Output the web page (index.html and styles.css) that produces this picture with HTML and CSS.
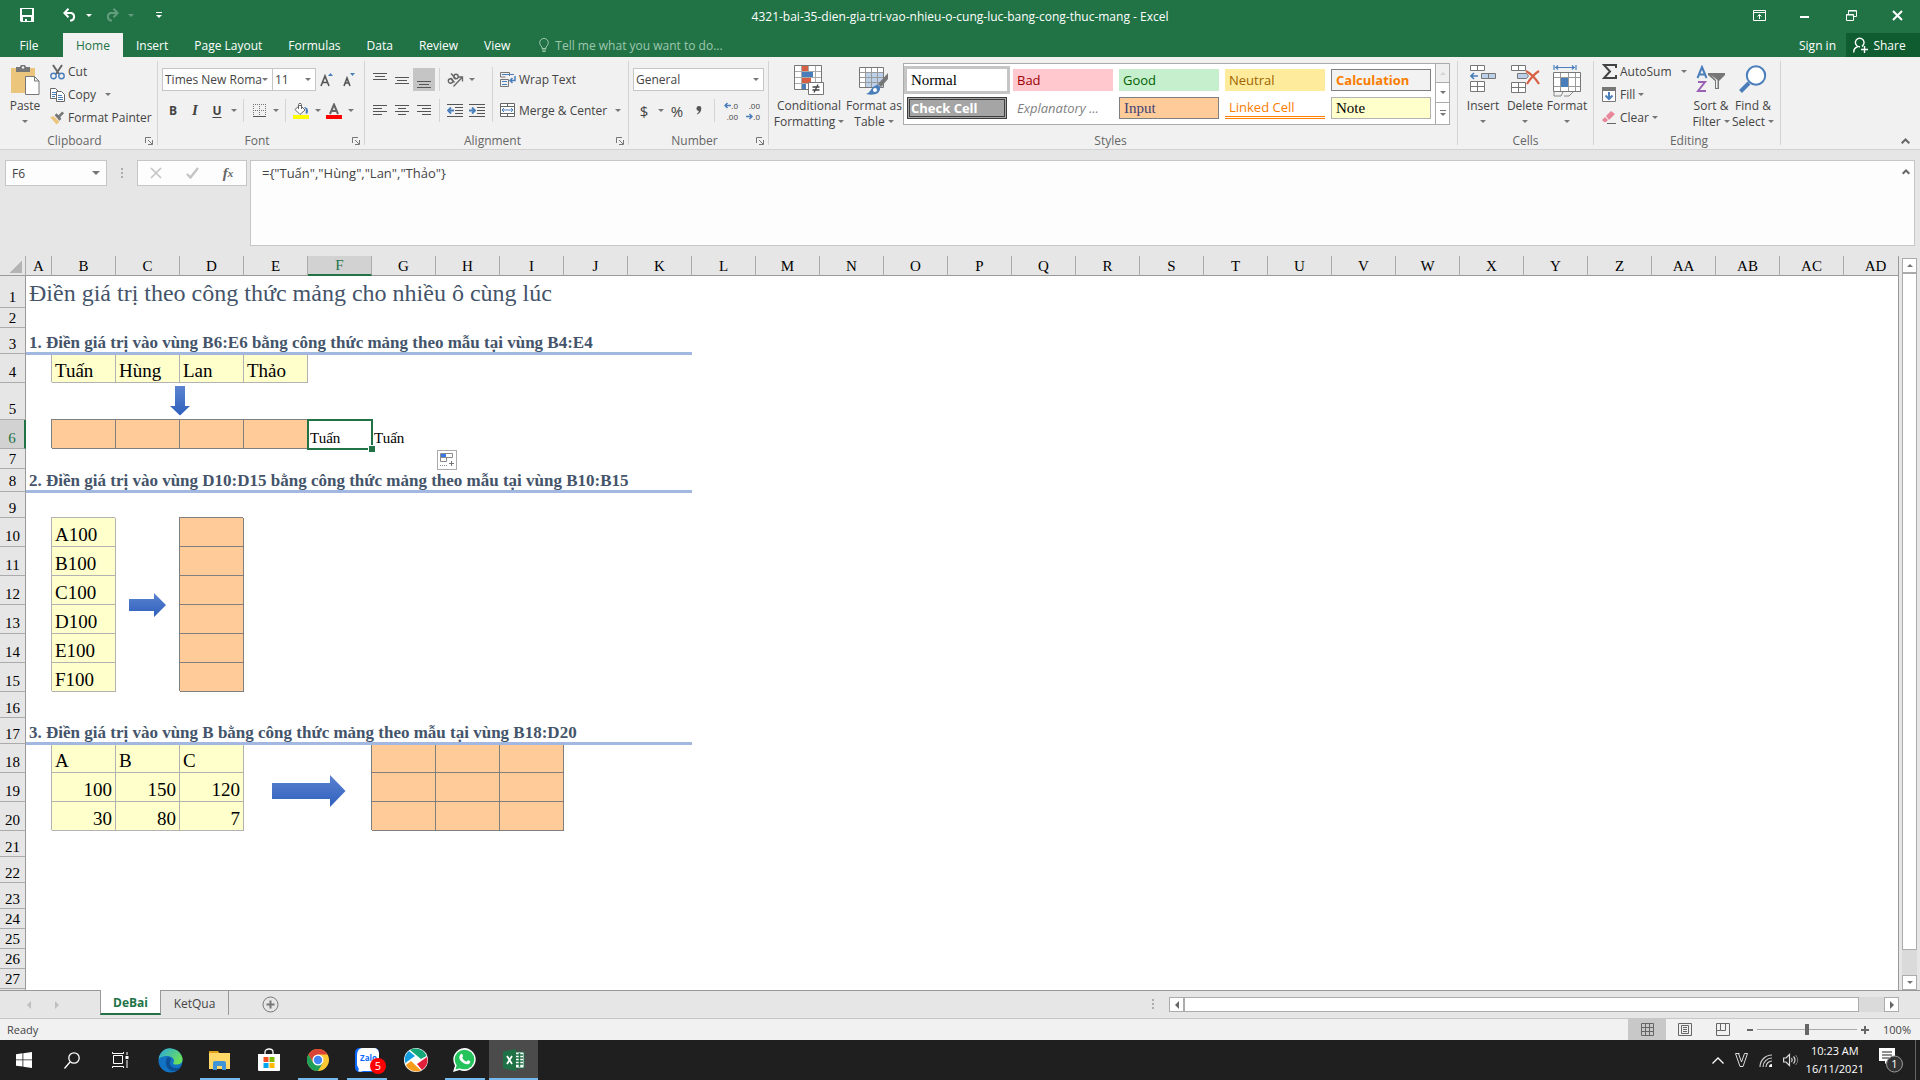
FILE: index.html
```html
<!DOCTYPE html>
<html lang="vi">
<head>
<meta charset="UTF-8">
<meta name="viewport" content="width=device-width, initial-scale=1.0">
<title>4321-bai-35-dien-gia-tri-vao-nhieu-o-cung-luc-bang-cong-thuc-mang - Excel</title>
<link rel="stylesheet" href="styles.css">
</head>
<body>
    <!-- Title bar -->
    <header class="titlebar">
        <div class="quick">
            <button aria-label="Save"><svg width="14" height="14" viewBox="0 0 14 14"><path fill="#fff" fill-rule="evenodd" d="M0 0h14v14H1l-1-1zM2 1v6h10V1zM3 9v4h2v-2h2v2h4V9z"/></svg></button>
            <button aria-label="Undo"><svg width="14" height="14" viewBox="0 0 14 14"><path fill="none" stroke="#fff" stroke-width="2" d="M1 5h7.500a4 4 0 0 1 0 7.500H7M5.500.700L1.300 5l4.200 4.200"/></svg></button>
            <button class="drop light" aria-label="Undo list"><i class="caret"></i></button>
            <button class="off" aria-label="Redo"><svg width="14" height="14" viewBox="0 0 14 14"><path fill="none" stroke="#fff" stroke-width="2" d="M13 5H5.500a4 4 0 0 0 0 7.500H7M8.500.700L12.700 5l-4.200 4.200"/></svg></button>
            <button class="drop light off" aria-label="Redo list"><i class="caret"></i></button>
            <button class="light custom" aria-label="Customize toolbar"><i class="bar"></i><i class="caret"></i></button>
        </div>
        <div class="title">4321-bai-35-dien-gia-tri-vao-nhieu-o-cung-luc-bang-cong-thuc-mang - Excel</div>
        <div class="window">
            <button aria-label="Ribbon options"><svg width="13" height="11" viewBox="0 0 13 11"><path fill="none" stroke="#fff" d="M.5.5h12v10H.5zM.5 2.500h12M6.500 9V4.500M4.500 6.500l2-2 2 2"/></svg></button>
            <button aria-label="Minimize"><svg width="10" height="10" viewBox="0 0 10 10"><path fill="#fff" d="M0 6h9v2H0z"/></svg></button>
            <button aria-label="Restore"><svg width="11" height="11" viewBox="0 0 11 11"><path fill="none" stroke="#fff" d="M.5 4.500h7v6h-7zM.5 5h7M2.500 4V.5h8v6H8M2.500 1h8"/></svg></button>
            <button aria-label="Close"><svg width="11" height="11" viewBox="0 0 11 11"><path stroke="#fff" stroke-width="2" d="M1 1l9 9M10 1l-9 9"/></svg></button>
        </div>
    </header>

    <nav class="tabs">
        <button class="file">File</button>
        <button class="active">Home</button>
        <button>Insert</button>
        <button>Page Layout</button>
        <button>Formulas</button>
        <button>Data</button>
        <button>Review</button>
        <button>View</button>
        <label class="tell">
            <svg width="10" height="14" viewBox="0 0 10 14"><path fill="none" stroke="#9fc7ae" d="M3 10.500V9C1.500 7.500.700 6.500.700 4.700a4.300 4.300 0 0 1 8.600 0C9.300 6.500 8.500 7.500 7 9v1.500zM3 12h4M3.500 13.500h3"/></svg>
            <input type="text" placeholder="Tell me what you want to do...">
        </label>
        <button class="sign">Sign in</button>
        <button class="share"><svg width="15" height="16" viewBox="0 0 15 16"><path fill="none" stroke="#fff" stroke-width="1.400" d="M.7 15.500c0-3 1.500-5 3.800-5.500M7 9.800a4.300 4.300 0 1 1 3-1.500L9 9.500M11.500 9v7M8 12.500h7"/></svg>Share</button>
    </nav>

    <!-- Ribbon -->
    <section class="ribbon">
        <div class="group">
            <div class="body">
                <button class="big paste">
                    <span class="pic"><svg width="29" height="30" viewBox="0 0 29 30"><path fill="#ecc57d" d="M0 3h24v25H0z"/><path fill="#777" d="M5 2h4c0-3 6-3 6 0h4v5H5z"/><circle cx="12" cy="2.500" r="1.200" fill="#f1f1f1"/><path fill="#fff" stroke="#777" d="M14.500 11.500h9l4.500 4.500v13.500H14.500zM23.500 11.500V16H28"/></svg></span>
                    Paste<i class="caret"></i>
                </button>
                <div class="stack">
                    <button><svg width="15" height="16" viewBox="0 0 15 16"><path stroke="#666" stroke-width="2" d="M3 1l6 9M12 1L6 10"/><g fill="none" stroke="#4a7ebb" stroke-width="1.400"><circle cx="3.500" cy="12" r="2.700"/><circle cx="11.500" cy="12" r="2.700"/></g></svg>Cut</button>
                    <button><svg width="15" height="14" viewBox="0 0 15 14"><path fill="#fff" stroke="#666" d="M.5.5h5l3 3v7h-8z"/><path stroke="#4a7ebb" d="M2 4.500h4M2 6.500h4M2 8.500h3"/><path fill="#fff" stroke="#666" d="M6.500 3.500h5l3 3v7h-8z"/><path stroke="#4a7ebb" d="M8 7.500h4M8 9.500h5M8 11.500h5"/></svg>Copy<i class="caret far"></i></button>
                    <button><svg width="15" height="14" viewBox="0 0 16 14"><path fill="#ecc57d" d="M0 6l4-1 6 6-3 3z"/><path fill="#777" d="M5 4l2-2 2 2 4-4 2 2-4 4 1 2-2 2z"/></svg>Format Painter</button>
                </div>
            </div>
            <div class="name"><span>Clipboard</span><svg class="launch" width="8" height="8" viewBox="0 0 8 8"><path fill="none" stroke="#777" d="M.5 6V.5H6M3 3l4 4M7.500 3v4.500H3"/></svg></div>
        </div>

        <div class="group">
            <div class="body rows">
                <div class="line">
                    <select class="font-name" aria-label="Font"><option>Times New Roma</option></select>
                    <select class="font-size" aria-label="Font size"><option>11</option></select>
                    <button class="tool" aria-label="Increase font size"><svg width="14" height="15" viewBox="0 0 14 15"><path fill="none" stroke="#555" stroke-width="1.600" d="M1 14L5 4l4 10M2.500 10.500h5"/><path fill="#4a7ebb" d="M8 4l2.500-3L13 4z"/></svg></button>
                    <button class="tool" aria-label="Decrease font size"><svg width="14" height="15" viewBox="0 0 14 15"><path fill="none" stroke="#555" stroke-width="1.600" d="M2 14l3-8 3 8M3 11h4"/><path fill="#4a7ebb" d="M8 1l2.500 3L13 1z"/></svg></button>
                </div>
                <div class="line">
                    <button class="tool bold">B</button>
                    <button class="tool italic">I</button>
                    <button class="tool under">U</button>
                    <button class="drop" aria-label="Underline style"><i class="caret"></i></button>
                    <i class="sep"></i>
                    <button class="tool" aria-label="Borders"><svg width="13" height="13" viewBox="0 0 13 13"><path stroke="#777" stroke-dasharray="1 1" d="M0 .5h13M0 6.500h13M.5 0v12M6.500 0v12M12.500 0v12"/><path stroke="#555" d="M0 12.500h13"/></svg></button>
                    <button class="drop" aria-label="Border style"><i class="caret"></i></button>
                    <i class="sep"></i>
                    <button class="tool" aria-label="Fill color"><svg width="16" height="16" viewBox="0 0 16 16"><path fill="#ff0" d="M0 12h16v4H0z"/><path fill="#fff" stroke="#666" d="M2 6.500L7 2l5 5-5 4.500zM5.500 6V1.500c0-1.500 3-1.500 3 0V6"/><path fill="#4a7ebb" d="M11 4c4 0 5 4 3 7-1 0-2-1-1-4z"/></svg></button>
                    <button class="drop" aria-label="Fill colors"><i class="caret"></i></button>
                    <button class="tool" aria-label="Font color"><svg width="16" height="16" viewBox="0 0 16 16"><path fill="none" stroke="#666" stroke-width="2" d="M4 11l4-9.500L12 11M5.500 8h5"/><path fill="red" d="M0 12h16v4H0z"/></svg></button>
                    <button class="drop" aria-label="Font colors"><i class="caret"></i></button>
                </div>
            </div>
            <div class="name"><span>Font</span><svg class="launch" width="8" height="8" viewBox="0 0 8 8"><path fill="none" stroke="#777" d="M.5 6V.5H6M3 3l4 4M7.500 3v4.500H3"/></svg></div>
        </div>

        <div class="group">
            <div class="body">
                <div class="rows">
                    <div class="line">
                        <button class="tool" aria-label="Top align"><svg width="14" height="16" viewBox="0 0 14 16"><path stroke="#555" d="M0 1.500h14M2 4.500h10M0 7.500h14"/></svg></button>
                        <button class="tool" aria-label="Middle align"><svg width="14" height="16" viewBox="0 0 14 16"><path stroke="#555" d="M0 5.500h14M2 8.500h10M0 11.500h14"/></svg></button>
                        <button class="tool on" aria-label="Bottom align"><svg width="14" height="16" viewBox="0 0 14 16"><path stroke="#555" d="M0 9.500h14M2 12.500h10M0 15.500h14"/></svg></button>
                        <i class="sep"></i>
                        <button class="tool" aria-label="Orientation"><svg width="17" height="15" viewBox="0 0 17 15"><g fill="none" stroke="#666" stroke-width="1.400"><circle cx="3.500" cy="9" r="2.200"/><path d="M3.500 6l4 4.500"/><circle cx="9" cy="4.500" r="2.200"/><path d="M4 1.500l5 5.500"/></g><path fill="none" stroke="#666" stroke-width="1.300" d="M6.500 14.500l8.500-9M11 5h4.500v4.500"/></svg></button>
                        <button class="drop" aria-label="Orientation list"><i class="caret"></i></button>
                    </div>
                    <div class="line">
                        <button class="tool" aria-label="Align left"><svg width="14" height="11" viewBox="0 0 14 11"><path stroke="#555" d="M0 .5h14M0 3.500h9M0 6.500h14M0 9.500h9"/></svg></button>
                        <button class="tool" aria-label="Center"><svg width="14" height="11" viewBox="0 0 14 11"><path stroke="#555" d="M0 .5h14M3 3.500h8M0 6.500h14M3 9.500h8"/></svg></button>
                        <button class="tool" aria-label="Align right"><svg width="14" height="11" viewBox="0 0 14 11"><path stroke="#555" d="M0 .5h14M5 3.500h9M0 6.500h14M5 9.500h9"/></svg></button>
                        <i class="sep"></i>
                        <button class="tool" aria-label="Decrease indent"><svg width="16" height="13" viewBox="0 0 16 13"><path stroke="#555" d="M0 .5h16M8 3.500h8M8 6.500h8M8 9.500h8M0 12.500h16"/><path fill="none" stroke="#4a7ebb" stroke-width="1.800" d="M1 6.500h6M4 3.500l-3 3 3 3"/></svg></button>
                        <button class="tool" aria-label="Increase indent"><svg width="16" height="13" viewBox="0 0 16 13"><path stroke="#555" d="M0 .5h16M8 3.500h8M8 6.500h8M8 9.500h8M0 12.500h16"/><path fill="none" stroke="#4a7ebb" stroke-width="1.800" d="M0 6.500h6M3 3.500l3 3-3 3"/></svg></button>
                    </div>
                </div>
                <i class="sep tall"></i>
                <div class="rows">
                    <button class="wide"><svg width="16" height="16" viewBox="0 0 16 16"><path fill="none" stroke="#777" d="M.5 4V.5h9V4M.5 4v1h5M.5 7.500h8v7h-8z"/><path stroke="#4a7ebb" d="M2 2.500h12M2 9.500h5M2 12.500h5"/><path fill="none" stroke="#4a7ebb" stroke-width="1.500" d="M15 4v4.500h-5M12.500 6L10 8.500l2.500 2.500"/></svg>Wrap Text</button>
                    <button class="wide"><svg width="16" height="15" viewBox="0 0 16 15"><path fill="#fff" stroke="#666" d="M.5.5h14v13H.5zM.5 3.500h14M.5 10.500h14M7.500.5v3M7.500 10.500v3"/><path fill="none" stroke="#4a7ebb" d="M2 7h11M4 5L2 7l2 2M11 5l2 2-2 2"/></svg>Merge &amp; Center<i class="caret"></i></button>
                </div>
            </div>
            <div class="name"><span>Alignment</span><svg class="launch" width="8" height="8" viewBox="0 0 8 8"><path fill="none" stroke="#777" d="M.5 6V.5H6M3 3l4 4M7.500 3v4.500H3"/></svg></div>
        </div>

        <div class="group">
            <div class="body rows">
                <select class="format" aria-label="Number format"><option>General</option></select>
                <div class="line">
                    <button class="tool sign-char">$</button>
                    <button class="drop" aria-label="Currency list"><i class="caret"></i></button>
                    <button class="tool sign-char">%</button>
                    <button class="tool" aria-label="Comma style"><svg width="6" height="9" viewBox="0 0 6 9"><path fill="#555" d="M3 0a2.300 2.300 0 0 1 2.300 2.500C5.300 5 4 7 1.500 8.500L1 7.700C2.300 6.800 2.800 6 2.800 5A2.300 2.300 0 0 1 3 0z"/></svg></button>
                    <i class="sep"></i>
                    <button class="tool decimals"><span><svg width="7" height="7" viewBox="0 0 7 7"><path fill="none" stroke="#4a7ebb" stroke-width="1.500" d="M1 3.500h6M3.500 1L1 3.500 3.500 6"/></svg>.0</span><span>.00</span></button>
                    <button class="tool decimals"><span>.00</span><span><svg width="7" height="7" viewBox="0 0 7 7"><path fill="none" stroke="#4a7ebb" stroke-width="1.500" d="M0 3.500h6M3.500 1L6 3.500 3.500 6"/></svg>.0</span></button>
                </div>
            </div>
            <div class="name"><span>Number</span><svg class="launch" width="8" height="8" viewBox="0 0 8 8"><path fill="none" stroke="#777" d="M.5 6V.5H6M3 3l4 4M7.500 3v4.500H3"/></svg></div>
        </div>

        <div class="group styles">
            <div class="body">
                <button class="big conditional">
                    <span class="pic"><svg width="30" height="30" viewBox="0 0 30 30"><path fill="#fff" stroke="#777" d="M.5.5h27v24H.5z"/><path stroke="#aaa" d="M7.500 1v23M14.500 1v23M21.500 1v23M1 6.500h26M1 12.500h26M1 18.500h26"/><path fill="#d75f43" d="M8 1h6v5H8zM8 13h9v5H8z"/><path fill="#4a7ebb" d="M8 7h11v5H8zM8 19h4v5H8z"/><path fill="#fff" stroke="#777" d="M14.500 17.500h15v12h-15z"/><path stroke="#444" stroke-width="1.300" d="M18.500 22h7M18.500 25h7M24 19.500l-4 8"/></svg></span>
                    Conditional<span>Formatting<i class="caret"></i></span>
                </button>
                <button class="big">
                    <span class="pic"><svg width="30" height="30" viewBox="0 0 30 30"><path fill="#fff" stroke="#777" d="M.5 2.500h24v20H.5z"/><path fill="#bdd0e9" d="M7 8h17v14H7z"/><path stroke="#999" d="M6.500 3v19M12.500 3v19M18.500 3v19M1 7.500h23M1 12.500h23M1 17.500h23"/><path fill="#777" d="M29 8v6l-7 8-3-3z"/><path fill="#4a7ebb" d="M18 20c4 0 4 5 1 8-3 2-8 2-12 1 5-1 5-8 11-9z"/><circle cx="16" cy="25" r="2" fill="#fff"/></svg></span>
                    Format as<span>Table<i class="caret"></i></span>
                </button>
                <div class="gallery">
                    <div class="swatches">
                        <button class="s-normal">Normal</button>
                        <button class="s-bad">Bad</button>
                        <button class="s-good">Good</button>
                        <button class="s-neutral">Neutral</button>
                        <button class="s-calc">Calculation</button>
                        <button class="s-check">Check Cell</button>
                        <button class="s-expl">Explanatory ...</button>
                        <button class="s-input">Input</button>
                        <button class="s-linked">Linked Cell</button>
                        <button class="s-note">Note</button>
                    </div>
                    <div class="pager">
                        <button class="off" aria-label="Previous styles"><i class="caret up"></i></button>
                        <button aria-label="Next styles"><i class="caret"></i></button>
                        <button class="more" aria-label="More styles"><i class="bar"></i><i class="caret"></i></button>
                    </div>
                </div>
            </div>
            <div class="name"><span>Styles</span></div>
        </div>

        <div class="group cells">
            <div class="body">
                <button class="big">
                    <span class="pic"><svg width="27" height="30" viewBox="0 0 27 30"><path fill="#fff" stroke="#777" d="M.5.5h14v5H.5zM7.500.5v5M.5 16.500h14v10H.5zM7.500 16.500v10M.5 21.500h14"/><path fill="#bdd0e9" stroke="#777" d="M11.500 8.500h14v5h-14zM18.500 8.500v5"/><path fill="none" stroke="#4a7ebb" stroke-width="1.600" d="M1 11h7M4 8l-3 3 3 3"/></svg></span>
                    Insert<i class="caret"></i>
                </button>
                <button class="big">
                    <span class="pic"><svg width="29" height="30" viewBox="0 0 29 30"><path fill="#fff" stroke="#777" d="M.5.5h14v5H.5zM7.500.5v5M.5 17.500h14v10H.5zM7.500 17.500v10M.5 22.500h14"/><path fill="#bdd0e9" stroke="#777" d="M6.500 8.500h9l2 2.500-2 2.500h-9z"/><path fill="none" stroke="#d75f43" stroke-width="2.200" d="M15 6c5 3 10 8 13 13M28 6c-5 3-9 8-12 13"/></svg></span>
                    Delete<i class="caret"></i>
                </button>
                <button class="big">
                    <span class="pic"><svg width="29" height="32" viewBox="0 0 29 32"><path fill="none" stroke="#4a7ebb" stroke-width="1.200" d="M1 0v5M23 0v5M2 2.500h20M5 .5l-2 2 2 2M19 .5l2 2-2 2"/><path fill="#fff" stroke="#777" d="M.5 7.500h27v19H.5z"/><path stroke="#999" d="M7.500 8v18M15.500 8v18M22.500 8v18M1 12.500h26M1 21.500h26"/><path fill="#4a7ebb" d="M8 13h7v9H8z"/><path fill="none" stroke="#888" d="M1 27v4h7l2-4M11 31h5l4-4"/></svg></span>
                    Format<i class="caret"></i>
                </button>
            </div>
            <div class="name"><span>Cells</span></div>
        </div>

        <div class="group editing">
            <div class="body">
                <div class="stack">
                    <button><svg width="15" height="15" viewBox="0 0 15 15"><path fill="none" stroke="#444" stroke-width="2" d="M14 4V1H2l6 6.500L2 14h12v-3"/></svg>AutoSum<i class="caret far"></i></button>
                    <button><svg width="15" height="16" viewBox="0 0 15 16"><path fill="#fff" stroke="#777" d="M.5.5h13v14H.5z"/><path fill="#777" d="M0 0h14v4H0z"/><path fill="none" stroke="#4a7ebb" stroke-width="2" d="M7 5v7M3.500 8.500L7 12l3.500-3.500"/></svg>Fill<i class="caret"></i></button>
                    <button><svg width="15" height="14" viewBox="0 0 15 14"><path fill="#e8879a" d="M4 5l5-5 4 3-6 6z"/><path fill="#e8879a" d="M3 6l3 3-2 2H2l-2-2z"/><path stroke="#666" d="M5 12.500h9"/></svg>Clear<i class="caret"></i></button>
                </div>
                <button class="big">
                    <span class="pic"><svg width="30" height="30" viewBox="0 0 30 30"><path fill="none" stroke="#4a7ebb" stroke-width="2" d="M1.500 13L6 2l4.500 11M3 9.500h6"/><path fill="none" stroke="#9a62b5" stroke-width="2" d="M2 17h7L2 26h8"/><path fill="#777" d="M12 8h17v2l-6 6v8h-4v-8l-7-6z"/><path fill="#f1f1f1" d="M15 10l5 5v8h1.500v-8z"/></svg></span>
                    Sort &amp;<span>Filter<i class="caret"></i></span>
                </button>
                <button class="big">
                    <span class="pic"><svg width="28" height="28" viewBox="0 0 28 28"><path stroke="#4a7ebb" stroke-width="4" d="M1.500 26.500L10 18"/><circle cx="17" cy="10.500" r="9.200" fill="#fff" stroke="#4a7ebb" stroke-width="2"/></svg></span>
                    Find &amp;<span>Select<i class="caret"></i></span>
                </button>
            </div>
            <div class="name"><span>Editing</span></div>
        </div>
        <button class="collapse" aria-label="Collapse ribbon"><svg width="9" height="6" viewBox="0 0 9 6"><path fill="none" stroke="#666" stroke-width="2" d="M.7 5.300l3.800-3.800 3.800 3.800"/></svg></button>
    </section>

    <!-- Formula bar -->
    <section class="formula">
        <div class="namebox"><input type="text" value="F6" aria-label="Name box"><button aria-label="Names"><i class="caret large"></i></button></div>
        <i class="dots"></i>
        <div class="fx">
            <button aria-label="Cancel"><svg width="12" height="12" viewBox="0 0 12 12"><path stroke="#c4c4c4" stroke-width="1.600" d="M1 1l10 10M11 1L1 11"/></svg></button>
            <button aria-label="Enter"><svg width="13" height="12" viewBox="0 0 13 12"><path fill="none" stroke="#c4c4c4" stroke-width="2.400" d="M1 7l3.500 3.500L12 1"/></svg></button>
            <button class="fn"><em>f</em>x</button>
        </div>
        <div class="entry">
            <textarea aria-label="Formula">={"Tuấn","Hùng","Lan","Thảo"}</textarea>
            <button aria-label="Collapse formula bar"><svg width="8" height="6" viewBox="0 0 8 6"><path fill="none" stroke="#666" stroke-width="2" d="M.7 4.800L4 1.500l3.300 3.300"/></svg></button>
        </div>
    </section>

    <!-- Sheet -->
    <main class="sheet">
        <div class="grid">
            <table>
                <colgroup><col class="c-num"><col class="c-a"><col span="29"></colgroup>
                <thead>
                    <tr><th class="corner"></th><th>A</th><th>B</th><th>C</th><th>D</th><th>E</th><th class="sel">F</th><th>G</th><th>H</th><th>I</th><th>J</th><th>K</th><th>L</th><th>M</th><th>N</th><th>O</th><th>P</th><th>Q</th><th>R</th><th>S</th><th>T</th><th>U</th><th>V</th><th>W</th><th>X</th><th>Y</th><th>Z</th><th>AA</th><th>AB</th><th>AC</th><th>AD</th></tr>
                </thead>
                <tbody>
                    <tr class="h32"><th>1</th><td class="h1" colspan="11">Điền giá trị theo công thức mảng cho nhiều ô cùng lúc</td></tr>
                    <tr class="h20"><th>2</th></tr>
                    <tr class="h26"><th>3</th><td class="h2" colspan="11">1. Điền giá trị vào vùng B6:E6 bằng công thức mảng theo mẫu tại vùng B4:E4</td></tr>
                    <tr class="h29"><th>4</th><td></td><td class="note">Tuấn</td><td class="note">Hùng</td><td class="note">Lan</td><td class="note">Thảo</td></tr>
                    <tr class="h37"><th>5</th></tr>
                    <tr class="h29"><th class="sel">6</th><td></td><td class="in"></td><td class="in"></td><td class="in"></td><td class="in"></td><td class="current">Tuấn</td><td>Tuấn</td></tr>
                    <tr class="h20"><th>7</th></tr>
                    <tr class="h23"><th>8</th><td class="h2" colspan="11">2. Điền giá trị vào vùng D10:D15 bằng công thức mảng theo mẫu tại vùng B10:B15</td></tr>
                    <tr class="h26"><th>9</th></tr>
                    <tr class="h29"><th>10</th><td></td><td class="note">A100</td><td></td><td class="in"></td></tr>
                    <tr class="h29"><th>11</th><td></td><td class="note">B100</td><td></td><td class="in"></td></tr>
                    <tr class="h29"><th>12</th><td></td><td class="note">C100</td><td></td><td class="in"></td></tr>
                    <tr class="h29"><th>13</th><td></td><td class="note">D100</td><td></td><td class="in"></td></tr>
                    <tr class="h29"><th>14</th><td></td><td class="note">E100</td><td></td><td class="in"></td></tr>
                    <tr class="h29"><th>15</th><td></td><td class="note">F100</td><td></td><td class="in"></td></tr>
                    <tr class="h26"><th>16</th></tr>
                    <tr class="h26"><th>17</th><td class="h2" colspan="11">3. Điền giá trị vào vùng B bằng công thức mảng theo mẫu tại vùng B18:D20</td></tr>
                    <tr class="h29"><th>18</th><td></td><td class="note">A</td><td class="note">B</td><td class="note">C</td><td colspan="2"></td><td class="in"></td><td class="in"></td><td class="in"></td></tr>
                    <tr class="h29"><th>19</th><td></td><td class="note num">100</td><td class="note num">150</td><td class="note num">120</td><td colspan="2"></td><td class="in"></td><td class="in"></td><td class="in"></td></tr>
                    <tr class="h29"><th>20</th><td></td><td class="note num">30</td><td class="note num">80</td><td class="note num">7</td><td colspan="2"></td><td class="in"></td><td class="in"></td><td class="in"></td></tr>
                    <tr class="h26"><th>21</th></tr>
                    <tr class="h26"><th>22</th></tr>
                    <tr class="h26"><th>23</th></tr>
                    <tr class="h20"><th>24</th></tr>
                    <tr class="h20"><th>25</th></tr>
                    <tr class="h20"><th>26</th></tr>
                    <tr class="h20"><th>27</th></tr>
                    <tr class="h20"><th></th></tr>
                </tbody>
            </table>
            <!-- shapes floating over the cells -->
            <svg class="shape down" width="20" height="30" viewBox="0 0 20 30"><defs><linearGradient id="blue" x2="0" y2="1"><stop offset="0" stop-color="#5b83d0"/><stop offset="1" stop-color="#2f60bd"/></linearGradient></defs><path fill="url(#blue)" d="M5 0h10v20h5L10 29.500 0 20h5z"/></svg>
            <svg class="shape across" width="38" height="24" viewBox="0 0 38 24"><path fill="url(#blue)" d="M0 6h25V0l12 12-12 12v-6H0z"/></svg>
            <svg class="shape long" width="74" height="32" viewBox="0 0 74 32"><path fill="url(#blue)" d="M0 8h58V0l15.500 16L58 32v-8H0z"/></svg>
            <button class="autofill" aria-label="Auto fill options"><svg width="15" height="15" viewBox="0 0 15 15"><path fill="#fff" stroke="#888" d="M.5.5h12v4H.5zM.5 4.500h6v4h-6z"/><path fill="#3b78e7" d="M1 1h5v3H1z"/><path stroke="#888" stroke-dasharray="1 1" d="M0 12.500h8"/><path stroke="#777" d="M11.500 8v5M9 10.500h5"/></svg></button>
        </div>
        <div class="vscroll">
            <button aria-label="Scroll up"><i class="caret up"></i></button>
            <i class="thumb"></i>
            <i class="track"></i>
            <button aria-label="Scroll down"><i class="caret"></i></button>
        </div>
    </main>

    <div class="sheetbar">
        <button class="nav" aria-label="Previous sheet"><i class="caret left"></i></button>
        <button class="nav" aria-label="Next sheet"><i class="caret right"></i></button>
        <button class="tab active">DeBai</button>
        <button class="tab">KetQua</button>
        <button class="add" aria-label="New sheet"><svg width="17" height="17" viewBox="0 0 17 17"><circle cx="8.500" cy="8.500" r="7.500" fill="none" stroke="#777"/><path stroke="#777" stroke-width="2" d="M8.500 4.500v8M4.500 8.500h8"/></svg></button>
        <i class="dots"></i>
        <div class="hscroll">
            <button aria-label="Scroll left"><i class="caret left"></i></button>
            <i class="thumb"></i>
            <i class="track"></i>
            <button aria-label="Scroll right"><i class="caret right"></i></button>
        </div>
    </div>

    <footer class="status">
        <span class="ready">Ready</span>
        <button class="on" aria-label="Normal view"><svg width="13" height="13" viewBox="0 0 13 13"><path fill="none" stroke="#666" d="M.5.5h12v12H.5zM4.500 0v13M8.500 0v13M0 4.500h13M0 8.500h13"/></svg></button>
        <button aria-label="Page layout view"><svg width="14" height="13" viewBox="0 0 14 13"><path fill="none" stroke="#666" d="M.5.5h13v12H.5zM3.500 2.500h7v8h-7zM5 4.500h4M5 6.500h4M5 8.500h4"/></svg></button>
        <button aria-label="Page break view"><svg width="14" height="13" viewBox="0 0 14 13"><path fill="none" stroke="#666" d="M.5.5h13v12H.5zM4.500 0v7.500H0M9.500 0v7.500H4.500"/></svg></button>
        <button class="zoom" aria-label="Zoom out"><svg width="8" height="8" viewBox="0 0 8 8"><path fill="#666" d="M1 3h6v2H1z"/></svg></button>
        <input type="range" min="0" max="200" value="100" aria-label="Zoom">
        <button class="zoom" aria-label="Zoom in"><svg width="8" height="8" viewBox="0 0 8 8"><path fill="#666" d="M0 3h8v2H0zM3 0h2v8H3z"/></svg></button>
        <span class="percent">100%</span>
    </footer>

    <!-- Windows taskbar -->
    <div class="taskbar">
        <button aria-label="Start"><svg width="16" height="16" viewBox="0 0 16 16"><path fill="#fff" d="M0 2.200L6.500 1.300v6.200H0zM7.300 1.200L16 0v7.500H7.300zM0 8.300h6.500v6.300L0 13.700zM7.300 8.300H16V16l-8.700-1.200z"/></svg></button>
        <button aria-label="Search"><svg width="16" height="17" viewBox="0 0 16 17"><path fill="none" stroke="#fff" stroke-width="1.300" d="M.5 16.500L6 10"/><circle cx="10" cy="6" r="5.200" fill="none" stroke="#fff" stroke-width="1.300"/></svg></button>
        <button aria-label="Task view"><svg width="17" height="16" viewBox="0 0 17 16"><path fill="none" stroke="#fff" d="M1.500 3.500h9v8h-9zM.5 0v1.500h11V0M.5 16v-1.500h11V16M15 0v3M15 8v8"/><path fill="#fff" d="M13.500 4h3v3h-3z"/></svg></button>
        <button class="app first" aria-label="Edge"><svg width="25" height="25" viewBox="0 0 25 25"><defs><linearGradient id="edge" y2=".6"><stop offset="0" stop-color="#2aa6e0"/><stop offset="1" stop-color="#6be05a"/></linearGradient></defs><circle cx="12.500" cy="12.500" r="12" fill="#1273c4"/><path fill="url(#edge)" d="M.6 11C2 4 7-.5 13 .5 20 1 25 7 24.500 12c-.5 4-4 5-8 4.500-2-.5-1-2-.5-3.500C16 8 6 6 .6 11z"/><path fill="#0c4f94" d="M9 10c-3 6 0 12 6 13 3 .5 6-1 8-4-4 2.500-12 1-11-5 0-2 1-3 1-3s-2-3-4-1z"/></svg></button>
        <button class="app open" aria-label="Explorer"><svg width="22" height="19" viewBox="0 0 22 19"><path fill="#e0a21a" d="M0 0h9l2 3H0z"/><path fill="#ffd868" d="M0 2h21v16H0z"/><path fill="#3f94d8" d="M4 19v-7q0-2 2-2h9q2 0 2 2v7h-4v-4H8v4z"/></svg></button>
        <button class="app" aria-label="Store"><svg width="22" height="24" viewBox="0 0 22 24"><path fill="none" stroke="#fff" stroke-width="1.300" d="M7 7V4c0-4 8-4 8 0v3"/><path fill="#fff" d="M0 6h22v16q0 1-1 1H1q-1 0-1-1z"/><path fill="#f25022" d="M5.500 9h5v5h-5z"/><path fill="#7fba00" d="M11.500 9h5v5h-5z"/><path fill="#00a4ef" d="M5.500 15h5v5h-5z"/><path fill="#ffb900" d="M11.500 15h5v5h-5z"/></svg></button>
        <button class="app open" aria-label="Chrome"><svg width="22" height="24" viewBox="0 0 24 24"><circle cx="12" cy="12" r="12" fill="#fcc934"/><path fill="#da4437" d="M1.600 6A12 12 0 0 1 22.400 6H12l-5.200 9z"/><path fill="#1e9e58" d="M1.600 6A12 12 0 0 0 12 24l5.200-9H6.800z"/><circle cx="12" cy="12" r="6" fill="#fff"/><circle cx="12" cy="12" r="4.600" fill="#4285f4"/></svg></button>
        <button class="app open zalo" aria-label="Zalo"><svg width="24" height="24" viewBox="0 0 24 24"><path fill="#0a68ff" d="M5 0h14q5 0 5 5v14q0 5-5 5H5q-5 0-5-5V5q0-5 5-5z"/><path fill="#fff" d="M7 0h12q4 0 5 5v14q0 4-4 4H8c-2 1-4 1-5 0 2-2 0-3-1-6V7q0-6 5-7z"/><text x="5" y="13" font-size="8" font-weight="bold" fill="#0a68ff">Zalo</text></svg><span class="badge">5</span></button>
        <button class="app" aria-label="Photos"><svg width="24" height="24" viewBox="0 0 24 24"><circle cx="12" cy="12" r="12" fill="#fff"/><path fill="#12a878" d="M6 2a11.500 11.500 0 0 1 16.500 6L17 11z"/><path fill="#e0203a" d="M23 9a11.500 11.500 0 0 1-5 13l-5-6z"/><path fill="#f59c1a" d="M17 22.500A11.500 11.500 0 0 1 2 17l5-4z"/><path fill="#149ee0" d="M1.300 15A11.500 11.500 0 0 1 5 3l6 5z"/></svg></button>
        <button class="app open" aria-label="WhatsApp"><svg width="23" height="24" viewBox="0 0 23 24"><path fill="#fff" d="M11.500 0a11.500 11.500 0 1 1-5 22L0 24l2-6.500A11.500 11.500 0 0 1 11.500 0z"/><circle cx="11.500" cy="11.500" r="9.800" fill="#25c35b"/><path fill="#25c35b" d="M2.500 21.500L4 16l4 4z"/><path fill="#fff" d="M8 6c1-.5 1.500 0 2 2 .3 1-1 1.300-.6 2 1 2 2 2.800 4 3.600.8 0 1-1.600 1.800-1.300 2 .8 2.300 1.200 2 2-1 2.500-3.500 2.500-6.500 1C7 13 4.500 9 8 6z"/></svg></button>
        <button class="app open active" aria-label="Excel"><svg width="22" height="22" viewBox="0 0 22 22"><path fill="#fff" stroke="#1f7246" d="M11 3h10v16H11z"/><path stroke="#1f7246" stroke-width="1.500" d="M13 6h7M13 9h7M13 12h7M13 15h7M16.500 4v14"/><path fill="#1f7246" d="M0 2.500L13 0v22L0 19.500z"/><path stroke="#fff" stroke-width="1.800" d="M4 7l5 8M9 7l-5 8"/></svg></button>
        <div class="tray">
            <div class="tray-icons">
                <svg width="12" height="7" viewBox="0 0 12 7"><path fill="none" stroke="#fff" stroke-width="1.300" d="M.5 6.500L6 1l5.500 5.500"/></svg>
                <svg width="13" height="14" viewBox="0 0 13 14"><path fill="none" stroke="#ddd" d="M.5.5h3L6.500 9l3-8.500h3L8 13.500H5zM3 .5h1.500"/></svg>
                <svg width="13" height="13" viewBox="0 0 13 13"><g fill="none" stroke="#ccc" stroke-width="1.200"><path d="M1 13A12 12 0 0 1 13 1"/><path d="M4 13a9 9 0 0 1 9-9"/><path d="M7 13a6 6 0 0 1 6-6"/></g><path fill="#fff" d="M10 13a3 3 0 0 1 3-3v3z"/></svg>
                <svg width="16" height="14" viewBox="0 0 16 14"><path fill="none" stroke="#ddd" stroke-width="1.200" d="M.6 5v4H3l3.500 3.500v-11L3 5zM8.500 5q1.500 2 0 4M10.500 3.500q3 3.500 0 7"/><path fill="none" stroke="#777" d="M12.500 2q4.500 5 0 10"/></svg>
            </div>
            <div class="clock"><span>10:23 AM</span><span>16/11/2021</span></div>
            <svg class="notice" width="24" height="25" viewBox="0 0 24 25"><path fill="#fff" d="M0 0h16v13H9l-3 3v-3H0z"/><path stroke="#222" stroke-width="1.200" d="M3 4h10M3 7h10M3 10h7"/><circle cx="15.500" cy="16" r="8" fill="#333" stroke="#999"/><text x="15.500" y="20" font-size="11" text-anchor="middle" fill="#fff">1</text></svg>
        </div>
    </div>
</body>
</html>
```
FILE: styles.css
```css
* {
    box-sizing: border-box;
}
body {
    margin: 0;
    height: 100vh;
    display: flex;
    flex-direction: column;
    overflow: hidden;
    background-color: #e6e6e6;
    color: #444;
    font-family: "Open Sans", "Noto Sans", sans-serif;
    font-size: 12px;
}
button, input, select, textarea {
    margin: 0;
    padding: 0;
    border: none;
    border-radius: 0;
    background: none;
    color: inherit;
    font: inherit;
    outline: none;
}
button {
    display: flex;
    align-items: center;
    justify-content: center;
    white-space: nowrap;
}
svg {
    display: block;
    flex: none;
}
.off {
    opacity: 0.3;
}

/* small triangles */
.caret {
    display: inline-block;
    flex: none;
    width: 0;
    border: 3px solid transparent;
    border-top-color: #777;
    border-bottom-width: 0;
}
.caret.large {
    border-width: 4px 4px 0;
}
.caret.up {
    border-width: 0 3px 3px;
    border-bottom-color: #777;
}
.caret.left {
    border-width: 4px 4px 4px 0;
    border-color: transparent #666;
}
.caret.right {
    border-width: 4px 0 4px 4px;
    border-color: transparent #666;
}
.bar {
    width: 6px;
    height: 1px;
    background-color: #777;
}
.light .caret {
    border-top-color: #fff;
}
.light .bar {
    background-color: #fff;
}
.custom, .more {
    flex-direction: column;
    gap: 2px;
}

/* title bar */
.titlebar {
    display: grid;
    grid-template-columns: 1fr auto 1fr;
    height: 33px;
    background-color: #217346;
    color: #fff;
}
.quick {
    display: flex;
    align-items: center;
    padding: 0 0 3px 16px;
}
.quick button {
    width: 22px;
    height: 22px;
}
.quick button:nth-child(2) {
    margin-left: 21px;
}
.quick .drop {
    width: 14px;
    margin: 0 5px 0 1px;
}
.quick .custom {
    margin-left: 5px;
}
.title {
    align-self: center;
}
.window {
    display: flex;
    justify-content: flex-end;
    padding-bottom: 3px;
}
.window button {
    width: 46px;
}

/* ribbon tabs */
.tabs {
    display: flex;
    height: 24px;
    background-color: #217346;
    color: #fff;
}
.tabs button {
    padding: 0 13px;
}
.tabs .file {
    width: 63px;
    padding-right: 18px;
}
.tabs .active {
    background-color: #f1f1f1;
    color: #217346;
}
.tell {
    display: flex;
    flex: 1;
    align-items: center;
    gap: 6px;
    padding-left: 16px;
}
.tell input {
    flex: 1;
}
.tell input::placeholder {
    color: #9fc7ae;
}
.tabs .sign {
    padding: 0 10px;
}
.tabs .share {
    gap: 5px;
    width: 74px;
    padding: 0 14px 0 7px;
    background-color: #0e5c2f;
}

/* ribbon */
.ribbon {
    display: flex;
    height: 93px;
    padding-top: 4px;
    background-color: #f1f1f1;
    border-bottom: 1px solid #d2d2d2;
}
.group {
    display: flex;
    flex-direction: column;
    padding: 0 5px 0 4px;
    background: linear-gradient(#d4d4d4, #d4d4d4) right top / 1px 84px no-repeat;
}
.body {
    display: flex;
    height: 72px;
}
.name {
    display: flex;
    align-items: center;
    height: 15px;
    color: #666;
}
.name span {
    flex: 1;
    text-align: center;
}
.stack {
    display: grid;
    grid-auto-rows: 23px;
    margin-top: -1px;
}
.stack button {
    justify-content: flex-start;
    gap: 3px;
}
.stack .far {
    margin-left: 6px;
}
.rows {
    display: flex;
    flex-direction: column;
    gap: 8px;
    padding-top: 7px;
}
.line {
    display: flex;
    height: 23px;
}
.tool {
    width: 22px;
    height: 23px;
}
.tool.on {
    background-color: #c5c5c5;
}
.drop {
    width: 11px;
}
.sep {
    width: 1px;
    margin: 0 4px;
    background-color: #d4d4d4;
}
.sep.tall {
    height: 55px;
    margin: 6px 7px 0 4px;
}
.big {
    flex-direction: column;
    justify-content: flex-start;
    width: 42px;
    padding-top: 4px;
    line-height: 16px;
}
.big .pic {
    height: 33px;
}
.big > .caret {
    margin-top: 6px;
}
.big span .caret {
    margin: 0 0 3px 3px;
}
.group:first-child {
    width: 158px;
}
.paste {
    width: 42px;
    margin-right: 4px;
}
.group:nth-child(2) {
    width: 207px;
}
.group:nth-child(3) {
    width: 264px;
}
.group:nth-child(4) {
    width: 140px;
}
select {
    height: 23px;
    padding-left: 2px;
    border: 1px solid #c6c6c6;
    appearance: none;
    background: #fff url("data:image/svg+xml,%3Csvg xmlns='http://www.w3.org/2000/svg' width='12' height='3'%3E%3Cpath fill='%23777' d='M3 0h6L6 3z'/%3E%3C/svg%3E") right 1px center no-repeat;
}
.font-name {
    width: 112px;
    padding-right: 10px;
}
.font-size {
    width: 44px;
    margin: 0 1px 0 -1px;
}
.format {
    width: 131px;
}
.bold {
    font-weight: bold;
}
.italic {
    font-family: "Liberation Serif", serif;
    font-size: 15px;
    font-style: italic;
    font-weight: bold;
}
.under {
    font-weight: bold;
    text-decoration: underline;
    text-underline-offset: 2px;
}
.wide {
    justify-content: flex-start;
    gap: 3px;
    height: 23px;
}
.wide .caret {
    margin-left: 5px;
}
.sign-char {
    font-size: 15px;
}
.decimals {
    flex-direction: column;
    align-items: flex-end;
    padding-right: 3px;
    font-size: 8px;
    line-height: 11px;
}
.decimals span {
    display: flex;
    align-items: center;
}

/* cell styles gallery */
.styles {
    flex: 1;
    padding: 0 8px 0 2px;
}
.conditional {
    width: 76px;
}
.styles .big:nth-child(2) {
    width: 54px;
}
.gallery {
    display: flex;
    flex: 1;
    height: 62px;
    margin: 2px 0 0 2px;
    border: 1px solid #ababab;
    background-color: #fff;
}
.swatches {
    display: grid;
    flex: 1;
    grid-template-columns: repeat(5, 1fr);
    grid-auto-rows: 22px;
    gap: 6px;
    padding: 5px 4px 0 3px;
}
.swatches button {
    justify-content: flex-start;
    padding-left: 4px;
    font-size: 13px;
}
.swatches .s-normal, .swatches .s-input, .swatches .s-note {
    font-family: "Liberation Serif", serif;
    font-size: 15px;
}
.s-normal {
    color: #000;
    box-shadow: 0 0 0 3px #c5c5c5;
}
.s-bad {
    background-color: #ffc7ce;
    color: #9c0006;
}
.s-good {
    background-color: #c6efce;
    color: #006100;
}
.s-neutral {
    background-color: #ffeb9c;
    color: #9c6500;
}
.s-calc {
    border: 1px solid #7f7f7f;
    background-color: #f2f2f2;
    color: #fa7d00;
    font-weight: bold;
}
.s-check {
    border: 3px double #3f3f3f;
    background-color: #a5a5a5;
    color: #fff;
    font-weight: bold;
}
.swatches .s-check {
    padding-left: 1px;
}
.s-expl {
    color: #7f7f7f;
    font-style: italic;
}
.s-input {
    border: 1px solid #7f7f7f;
    background-color: #ffcc99;
    color: #3f3f76;
}
.s-linked {
    border-bottom: 3px double #ff8001;
    color: #fa7d00;
}
.s-note {
    border: 1px solid #b2b2b2;
    background-color: #ffffcc;
    color: #000;
}
.pager {
    display: grid;
    width: 14px;
    border-left: 1px solid #ababab;
}
.pager button + button {
    border-top: 1px solid #ababab;
}
.pager .off {
    background-color: #ccc;
}
.cells {
    width: 136px;
}
.editing {
    width: 187px;
    padding-left: 8px;
}
.editing .stack {
    width: 88px;
}
.collapse {
    align-self: flex-end;
    width: 139px;
    height: 16px;
    padding: 0 10px 0 0;
    justify-content: flex-end;
}

/* formula bar */
.formula {
    display: flex;
    align-items: flex-start;
    height: 106px;
    padding: 10px 5px 0;
}
.namebox, .fx, .entry {
    display: flex;
    border: 1px solid #c6c6c6;
    background-color: #fdfdfd;
}
.namebox {
    width: 102px;
    height: 26px;
}
.namebox input {
    flex: 1;
    min-width: 0;
    padding-left: 6px;
}
.namebox button {
    width: 20px;
}
.dots {
    width: 2px;
    height: 11px;
    margin: 8px 14px 0;
    background: repeating-linear-gradient(#ababab 0 2px, transparent 2px 4px);
}
.fx {
    width: 110px;
    height: 26px;
    margin-right: 3px;
}
.fx button {
    flex: 1;
}
.fx .fn {
    color: #666;
    font-family: "Liberation Serif", serif;
    font-size: 11px;
    font-weight: bold;
    font-style: italic;
}
.fn em {
    font-size: 15px;
}
.entry {
    flex: 1;
    height: 86px;
}
.entry textarea {
    flex: 1;
    padding: 3px 11px;
    resize: none;
    font-size: 13px;
    line-height: 18px;
}
.entry button {
    width: 16px;
    height: 22px;
}

/* sheet */
.sheet {
    display: flex;
    flex: 1;
    min-height: 0;
}
.grid {
    position: relative;
    flex: 1;
    overflow: hidden;
    background-color: #fff;
    border-right: 1px solid #999;
}
table {
    width: 1908px;
    table-layout: fixed;
    border-spacing: 0;
    color: #000;
    font-family: "Liberation Serif", serif;
    font-size: 15px;
    line-height: 17px;
}
col {
    width: 64px;
}
.c-num, .c-a {
    width: 26px;
}
th {
    padding: 0;
    background-color: #e6e6e6;
    font-weight: normal;
    vertical-align: bottom;
}
thead th {
    height: 20px;
    border-right: 1px solid #ababab;
    border-bottom: 1px solid #999;
}
tbody th {
    padding-bottom: 1px;
    border-right: 1px solid #999;
    border-bottom: 1px solid #ababab;
}
.h20 th, .h26 th {
    padding-bottom: 0;
}
thead .sel {
    border-bottom: 2px solid #217346;
    background-color: #d2d2d2;
    color: #217346;
}
tbody .sel {
    border-right: 2px solid #217346;
    background-color: #d2d2d2;
    color: #217346;
}
.corner {
    background: linear-gradient(135deg, transparent 50%, #b4b4b4 50%) 10px 5px / 12px 12px no-repeat #e6e6e6;
}
td {
    padding: 0 3px 2px 2px;
    vertical-align: bottom;
    white-space: nowrap;
}
.h20 { height: 20px; }
.h23 { height: 23px; }
.h26 { height: 26px; }
.h29 { height: 29px; }
.h32 { height: 32px; }
.h37 { height: 37px; }
.h1 {
    padding-left: 3px;
    color: #44546a;
    font-size: 24px;
    line-height: 26px;
}
.h2 {
    position: relative;
    padding: 0 0 0 3px;
    border-bottom: 2px solid #a2b8e1;
    box-shadow: 0 1px 0 #a2b8e1;
    color: #44546a;
    font-size: 17px;
    font-weight: bold;
    line-height: 18px;
}
.note {
    padding: 0 3px;
    border: solid #b2b2b2;
    border-width: 0 1px 1px 0;
    box-shadow: -1px -1px 0 #b2b2b2;
    background-color: #ffffcc;
    font-size: 19px;
    line-height: 22px;
}
.num {
    text-align: right;
}
.in {
    border: solid #7f7f7f;
    border-width: 0 1px 1px 0;
    box-shadow: -1px -1px 0 #7f7f7f;
    background-color: #ffcc99;
}
.current {
    position: relative;
    outline: 2px solid #217346;
    outline-offset: -1px;
}
.current::after {
    content: "";
    position: absolute;
    right: -3px;
    bottom: -3px;
    width: 6px;
    height: 6px;
    border: solid #fff;
    border-width: 1px 0 0 1px;
    background-color: #217346;
}
.shape {
    position: absolute;
}
.down {
    left: 170px;
    top: 130px;
}
.across {
    left: 129px;
    top: 337px;
}
.long {
    left: 272px;
    top: 519px;
}
.autofill {
    position: absolute;
    left: 437px;
    top: 194px;
    width: 20px;
    height: 20px;
    border: 1px solid #ababab;
    background-color: #fff;
}

/* scroll bars */
.vscroll {
    display: flex;
    flex-direction: column;
    width: 15px;
    margin: 2px 3px 0;
}
.vscroll button, .hscroll button {
    width: 15px;
    height: 15px;
    border: 1px solid #ababab;
    background-color: #fff;
}
.thumb {
    flex: 27;
    border: 1px solid #ababab;
    background-color: #fff;
}
.track {
    flex: 1;
    background-color: #dadada;
}

/* sheet tabs */
.sheetbar {
    display: flex;
    height: 29px;
    border-top: 1px solid #999;
    border-bottom: 1px solid #c6c6c6;
}
.nav {
    width: 28px;
    opacity: 0.3;
}
.nav:first-child {
    margin-left: 15px;
}
.nav + .tab {
    margin-left: 29px;
}
.tab {
    height: 24px;
    padding: 0 12px;
}
.tab.active {
    width: 61px;
    height: 25px;
    margin-top: -1px;
    padding-top: 2px;
    border: 1px solid #999;
    border-width: 0 1px 2px;
    border-bottom-color: #217346;
    background-color: #fff;
    color: #217346;
    font-weight: bold;
}
.tab:nth-child(4) {
    width: 68px;
    border-right: 1px solid #999;
}
.add {
    width: 82px;
}
.sheetbar .dots {
    margin: 8px 15px 0 auto;
}
.hscroll {
    display: flex;
    width: 38%;
    height: 15px;
    margin: 6px 21px 0 0;
}

/* status bar */
.status {
    display: flex;
    align-items: center;
    height: 21px;
    background-color: #f1f1f1;
    font-size: 11px;
}
.ready {
    flex: 1;
    padding-left: 7px;
}
.status button {
    width: 38px;
    height: 21px;
}
.status .on {
    background-color: #c8c8c8;
}
.status .zoom {
    width: 15px;
}
.status input {
    width: 100px;
    height: 21px;
    appearance: none;
    background: linear-gradient(#ababab, #ababab) center / 100% 1px no-repeat;
}
.status input::-webkit-slider-thumb {
    appearance: none;
    width: 4px;
    height: 11px;
    background-color: #666;
}
.percent {
    width: 48px;
    padding-right: 9px;
    text-align: right;
}

/* taskbar */
.taskbar {
    display: flex;
    height: 40px;
    background-color: #1f1f20;
    color: #fff;
}
.taskbar button {
    width: 48px;
}
.taskbar .app {
    position: relative;
    width: 49px;
}
.taskbar .first {
    margin-left: 2px;
}
.open {
    background: linear-gradient(#76b9ed, #76b9ed) bottom / 40px 2px no-repeat;
}
.open.active {
    background-color: #4b4b4c;
    background-size: 100% 2px;
}
.badge {
    position: absolute;
    right: 5px;
    bottom: 6px;
    width: 16px;
    height: 16px;
    border-radius: 50%;
    background-color: #f00;
    font-size: 11px;
    line-height: 16px;
}
.tray {
    display: flex;
    align-items: center;
    gap: 7px;
    margin-left: auto;
    margin-right: 4px;
    padding-right: 12px;
    border-right: 1px solid #666;
}
.tray-icons {
    display: flex;
    align-items: center;
    gap: 11px;
}
.clock {
    display: flex;
    flex-direction: column;
    margin-right: 8px;
    text-align: center;
    font-size: 11px;
    line-height: 18px;
}
```
